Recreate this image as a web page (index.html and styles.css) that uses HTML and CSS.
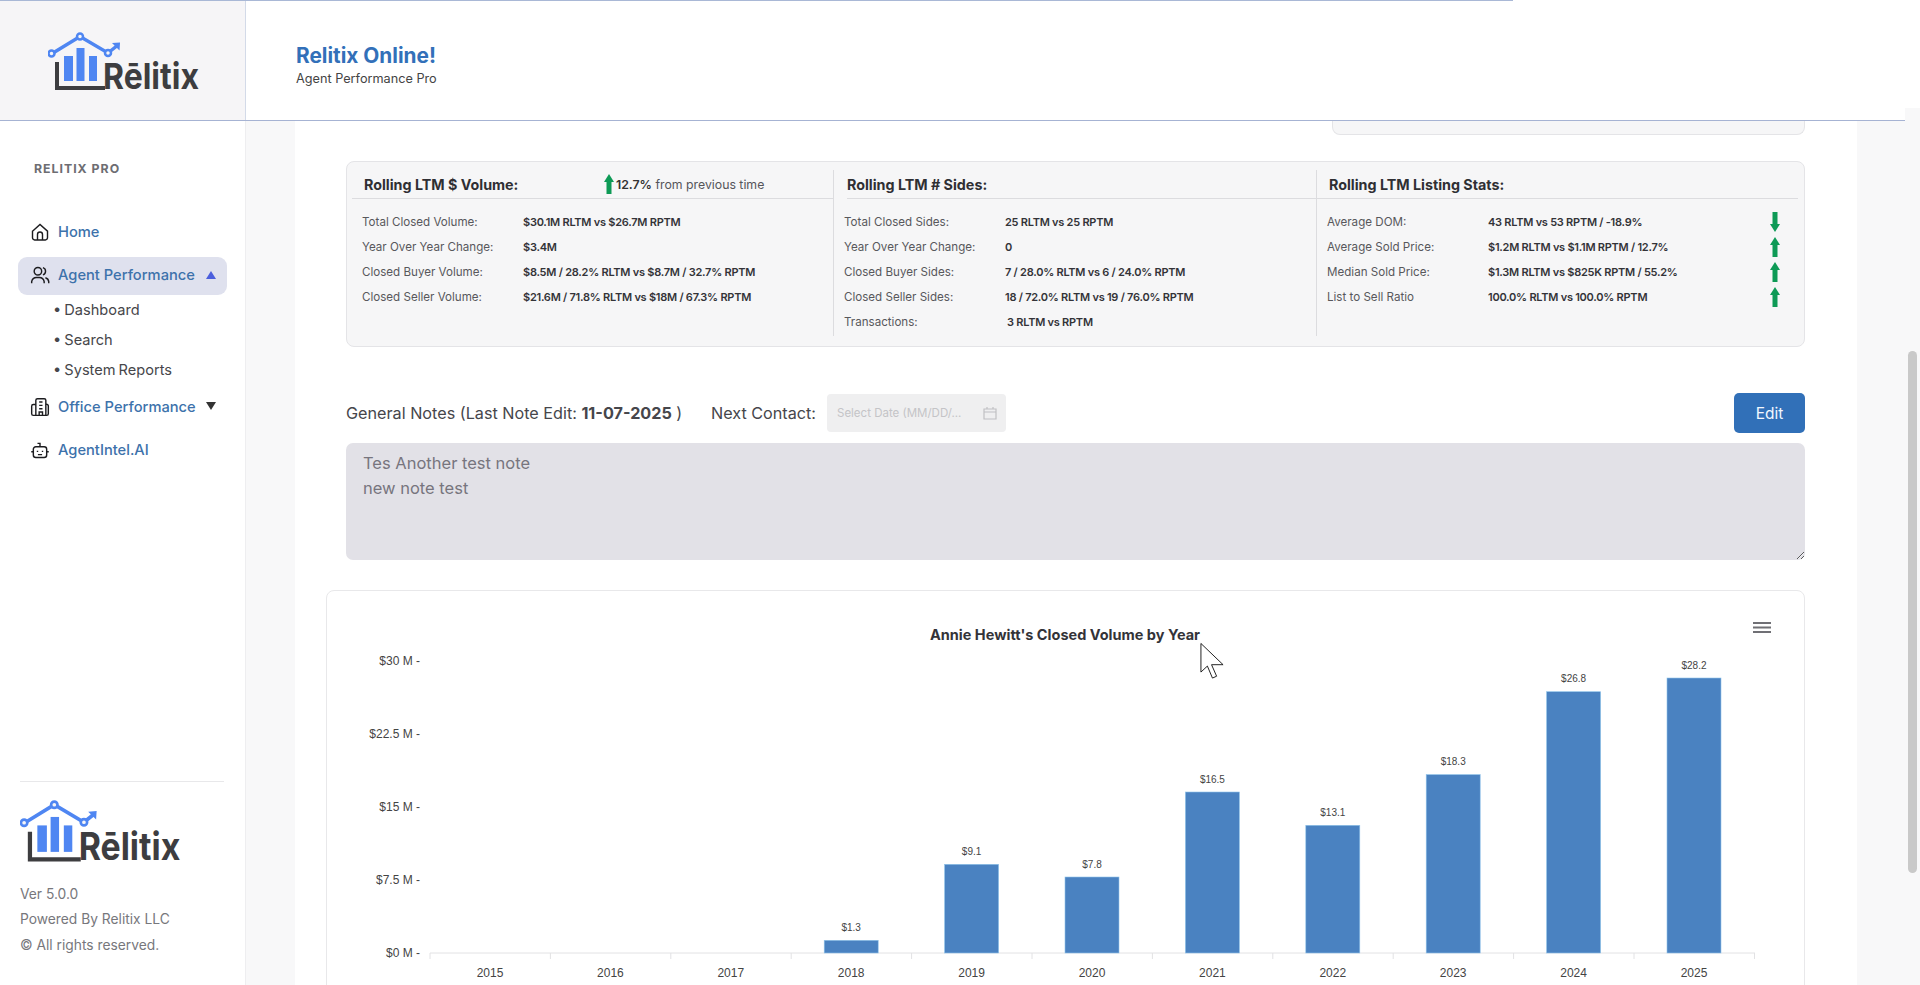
FILE: index.html
```html
<!DOCTYPE html>
<html lang="en">
<head>
<meta charset="utf-8">
<title>Relitix Online! Agent Performance Pro</title>
<link rel="stylesheet" href="styles.css">
</head>
<body>
<div class="app">
  <div class="topline"></div>
  <header class="header">
    <div class="header-logo">
      <svg class="logo-top" viewBox="0 0 190 68">
        <path class="logo-dark" d="M9 30V56H57" />
        <rect class="logo-blue-fill" x="16" y="24" width="9" height="25"/>
        <rect class="logo-blue-fill" x="28.5" y="16" width="8" height="33"/>
        <rect class="logo-blue-fill" x="41" y="24" width="8" height="25"/>
        <path class="logo-line" d="M5 21L32 4.500L60 21L70 13"/>
        <path class="logo-blue-fill" d="M64 11L72 10.500L71.500 18.500Z"/>
        <circle class="logo-dot" cx="3.500" cy="21.500" r="3"/>
        <circle class="logo-dot" cx="32" cy="4.500" r="3"/>
        <circle class="logo-dot" cx="60" cy="21" r="3"/>
        <text class="logo-word" x="55" y="57" textLength="96" lengthAdjust="spacingAndGlyphs">Rēlitix</text>
      </svg>
    </div>
    <div class="header-title">
      <h1>Relitix Online!</h1>
      <p>Agent Performance Pro</p>
    </div>
  </header>
  <div class="layout">
    <aside class="sidebar">
      <div class="side-label">RELITIX PRO</div>
      <nav class="nav">
        <a class="nav-item">
          <svg class="nav-icon" viewBox="0 0 24 24"><path d="M3 11L12 3L21 11V19A2.500 2.500 0 0 1 18.500 21.500H5.500A2.500 2.500 0 0 1 3 19Z"/><path d="M9 21.500V15A3 3 0 0 1 15 15V21.500"/></svg>
          <span>Home</span>
        </a>
        <a class="nav-item is-active">
          <svg class="nav-icon" viewBox="0 0 24 24"><circle cx="9.500" cy="7.500" r="4.500"/><path d="M2 22V20A6 6 0 0 1 8 15H11A6 6 0 0 1 17 20V22"/><path d="M15.500 3.200A4.500 4.500 0 0 1 15.500 11.800"/><path d="M18.500 15.300A5.500 5.500 0 0 1 22.500 20V22"/></svg>
          <span>Agent Performance</span>
          <i class="caret caret-up"></i>
        </a>
        <div class="sub-nav">
          <a class="sub-item">• Dashboard</a>
          <a class="sub-item">• Search</a>
          <a class="sub-item">• System Reports</a>
        </div>
        <a class="nav-item">
          <svg class="nav-icon" viewBox="0 0 24 24"><path d="M7 22V4A2 2 0 0 1 9 2H17A2 2 0 0 1 19 4V22"/><path d="M7 9H4A2 2 0 0 0 2 11V20A2 2 0 0 0 4 22H20A2 2 0 0 0 22 20V11A2 2 0 0 0 19 9"/><path d="M11 6H15M11 10H15M11 14H15M11 22V18H15V22M4.500 13H4.600M4.500 17H4.600"/></svg>
          <span>Office Performance</span>
          <i class="caret caret-down"></i>
        </a>
        <a class="nav-item">
          <svg class="nav-icon" viewBox="0 0 24 24"><rect x="4" y="8" width="16" height="13" rx="3"/><path d="M12 8V4H9M1.500 14H4M20 14H22.500M9 13V14.500M15 13V14.500M9.500 17.500H14.500"/></svg>
          <span>AgentIntel.AI</span>
        </a>
      </nav>
      <div class="side-footer">
        <svg class="logo-side" viewBox="0 0 190 68">
          <path class="logo-dark" d="M9 30V56H57" />
          <rect class="logo-blue-fill" x="16" y="24" width="9" height="25"/>
          <rect class="logo-blue-fill" x="28.5" y="16" width="8" height="33"/>
          <rect class="logo-blue-fill" x="41" y="24" width="8" height="25"/>
          <path class="logo-line" d="M5 21L32 4.500L60 21L70 13"/>
          <path class="logo-blue-fill" d="M64 11L72 10.500L71.500 18.500Z"/>
          <circle class="logo-dot" cx="3.500" cy="21.500" r="3"/>
          <circle class="logo-dot" cx="32" cy="4.500" r="3"/>
          <circle class="logo-dot" cx="60" cy="21" r="3"/>
          <text class="logo-word" x="55" y="57" textLength="96" lengthAdjust="spacingAndGlyphs">Rēlitix</text>
        </svg>
        <p>Ver 5.0.0</p>
        <p>Powered By Relitix LLC</p>
        <p>© All rights reserved.</p>
      </div>
    </aside>
    <main class="main">
      <div class="panel">
        <div class="card-fragment"></div>
        <section class="stats">
          <div class="stats-col">
            <div class="stats-head">
              <h2 class="head-fixed">Rolling LTM $ Volume:</h2>
              <svg class="arrow" viewBox="0 0 10 20"><path d="M5 0L10 8H7.500V20H2.500V8H0Z"/></svg>
              <span class="delta"><b>12.7%</b> from previous time</span>
            </div>
            <div class="row"><span class="k">Total Closed Volume:</span><span class="v">$30.1M RLTM vs $26.7M RPTM</span></div>
            <div class="row"><span class="k">Year Over Year Change:</span><span class="v">$3.4M</span></div>
            <div class="row"><span class="k">Closed Buyer Volume:</span><span class="v">$8.5M / 28.2% RLTM vs $8.7M / 32.7% RPTM</span></div>
            <div class="row"><span class="k">Closed Seller Volume:</span><span class="v">$21.6M / 71.8% RLTM vs $18M / 67.3% RPTM</span></div>
          </div>
          <div class="stats-col col-sides">
            <div class="stats-head head-inset"><h2>Rolling LTM # Sides:</h2></div>
            <div class="row"><span class="k">Total Closed Sides:</span><span class="v">25 RLTM vs 25 RPTM</span></div>
            <div class="row"><span class="k">Year Over Year Change:</span><span class="v">0</span></div>
            <div class="row"><span class="k">Closed Buyer Sides:</span><span class="v">7 / 28.0% RLTM vs 6 / 24.0% RPTM</span></div>
            <div class="row"><span class="k">Closed Seller Sides:</span><span class="v">18 / 72.0% RLTM vs 19 / 76.0% RPTM</span></div>
            <div class="row"><span class="k">Transactions:</span><span class="v v-nudge">3 RLTM vs RPTM</span></div>
          </div>
          <div class="stats-col col-listing">
            <div class="stats-head"><h2>Rolling LTM Listing Stats:</h2></div>
            <div class="row"><span class="k">Average DOM:</span><span class="v">43 RLTM vs 53 RPTM / -18.9%</span>
              <svg class="arrow arrow-row" viewBox="0 0 10 20"><path d="M5 20L10 12H7.500V0H2.500V12H0Z"/></svg></div>
            <div class="row"><span class="k">Average Sold Price:</span><span class="v">$1.2M RLTM vs $1.1M RPTM / 12.7%</span>
              <svg class="arrow arrow-row" viewBox="0 0 10 20"><path d="M5 0L10 8H7.500V20H2.500V8H0Z"/></svg></div>
            <div class="row"><span class="k">Median Sold Price:</span><span class="v">$1.3M RLTM vs $825K RPTM / 55.2%</span>
              <svg class="arrow arrow-row" viewBox="0 0 10 20"><path d="M5 0L10 8H7.500V20H2.500V8H0Z"/></svg></div>
            <div class="row"><span class="k">List to Sell Ratio</span><span class="v">100.0% RLTM vs 100.0% RPTM</span>
              <svg class="arrow arrow-row" viewBox="0 0 10 20"><path d="M5 0L10 8H7.500V20H2.500V8H0Z"/></svg></div>
          </div>
        </section>
        <div class="notes-bar">
          <span class="notes-title">General Notes (Last Note Edit: <b>11-07-2025</b> )</span>
          <span class="contact-label">Next Contact:</span>
          <div class="date-input">
            <span>Select Date (MM/DD/...</span>
            <svg class="cal" viewBox="0 0 14 14"><path d="M1 3H13V13H1ZM1 6H13M4 1V3M10 1V3"/></svg>
          </div>
          <button class="edit-btn" type="button">Edit</button>
        </div>
        <textarea class="notes" readonly>Tes Another test note
new note test</textarea>
        <section class="chart-card">
          <svg class="chart" viewBox="326 590 1479 395">
            <text class="chart-title" x="1065" y="640" text-anchor="middle">Annie Hewitt's Closed Volume by Year</text>
            <path class="burger" d="M1753 623H1771M1753 627.500H1771M1753 632H1771"/>
            <g class="y-labels" text-anchor="end">
              <text x="420" y="665">$30 M -</text>
              <text x="420" y="738">$22.5 M -</text>
              <text x="420" y="811">$15 M -</text>
              <text x="420" y="884">$7.5 M -</text>
              <text x="420" y="957">$0 M -</text>
            </g>
            <path class="axis" d="M430 953H1755M430 953V959M550.400 953V959M670.800 953V959M791.200 953V959M911.600 953V959M1032 953V959M1152.400 953V959M1272.800 953V959M1393.200 953V959M1513.600 953V959M1634 953V959M1754.500 953V959"/>
            <g class="bars">
              <rect x="824.200" y="940.300" width="54" height="12.700"/>
              <rect x="944.600" y="864.300" width="54" height="88.700"/>
              <rect x="1065" y="877" width="54" height="76"/>
              <rect x="1185.400" y="792" width="54" height="161"/>
              <rect x="1305.800" y="825.300" width="54" height="127.700"/>
              <rect x="1426.200" y="774.600" width="54" height="178.400"/>
              <rect x="1546.600" y="691.700" width="54" height="261.300"/>
              <rect x="1667" y="678" width="54" height="275"/>
            </g>
            <g class="bar-labels" text-anchor="middle">
              <text x="851.200" y="931">$1.3</text>
              <text x="971.600" y="855">$9.1</text>
              <text x="1092" y="868">$7.8</text>
              <text x="1212.400" y="783">$16.5</text>
              <text x="1332.800" y="816">$13.1</text>
              <text x="1453.200" y="765">$18.3</text>
              <text x="1573.600" y="682">$26.8</text>
              <text x="1694" y="669">$28.2</text>
            </g>
            <g class="x-labels" text-anchor="middle">
              <text x="490" y="977">2015</text>
              <text x="610.400" y="977">2016</text>
              <text x="730.800" y="977">2017</text>
              <text x="851.200" y="977">2018</text>
              <text x="971.600" y="977">2019</text>
              <text x="1092" y="977">2020</text>
              <text x="1212.400" y="977">2021</text>
              <text x="1332.800" y="977">2022</text>
              <text x="1453.200" y="977">2023</text>
              <text x="1573.600" y="977">2024</text>
              <text x="1694" y="977">2025</text>
            </g>
          </svg>
        </section>
      </div>
      <div class="scroll-thumb"></div>
    </main>
  </div>
  <svg class="cursor" viewBox="0 0 26 40"><path d="M1 1V32L8 25.500L13.500 38.500L18 36.500L12.500 24H25Z"/></svg>
</div>
</body>
</html>
```

FILE: styles.css
```css
* { box-sizing: border-box; }
html, body { margin: 0; padding: 0; }
body {
  font-family: Inter, "Noto Sans", "Liberation Sans", sans-serif;
  color: #444;
  background: #fff;
  overflow: hidden;
}
.app {
  position: relative;
  display: flex;
  flex-direction: column;
  width: 1920px;
  height: 985px;
  overflow: hidden;
}
.topline {
  position: absolute;
  top: 0;
  left: 0;
  z-index: 3;
  width: 1513px;
  height: 1px;
  background: #a9b8d6;
}

/* Header */
.header {
  position: relative;
  z-index: 2;
  display: flex;
  flex: none;
  width: 1905px;
  height: 121px;
  background: #fff;
  border-bottom: 1px solid #a6b3d3;
}
.header-logo {
  display: flex;
  align-items: flex-start;
  flex: none;
  width: 246px;
  padding: 32px 0 0 48px;
  background: #f6f5f7;
  border-right: 1px solid #d3dae8;
}
.logo-top { width: 190px; height: 68px; }
.header-title { padding: 44px 0 0 50px; }
.header-title h1 {
  margin: 0;
  font-size: 20.800px;
  line-height: 24px;
  font-weight: 700;
  color: #3270b9;
}
.header-title p {
  margin: 3px 0 0;
  font-size: 12.700px;
  line-height: 16px;
  color: #444;
}

/* Logo */
.logo-dark { fill: none; stroke: #3d3d40; stroke-width: 4; }
.logo-blue-fill { fill: #4f86f2; }
.logo-line { fill: none; stroke: #4f86f2; stroke-width: 3.500; }
.logo-dot { fill: #f6f5f7; stroke: #4f86f2; stroke-width: 2.500; }
.logo-word {
  font-family: Inter, sans-serif;
  font-size: 36px;
  font-weight: 700;
  fill: #3d3d40;
}

/* Page body */
.layout {
  display: flex;
  flex: 1;
  min-height: 0;
  margin-top: -13px;
}
.sidebar {
  display: flex;
  flex-direction: column;
  flex: none;
  width: 246px;
  margin-top: 13px;
  padding-top: 40px;
  background: #fff;
  border-right: 1px solid #eeeef0;
}
.side-label {
  padding-left: 34px;
  font-size: 12.300px;
  line-height: 16px;
  font-weight: 700;
  letter-spacing: 1px;
  color: #6d6d72;
}
.nav {
  display: flex;
  flex-direction: column;
  gap: 5px;
  margin: 37px 18px 0;
}
.nav-item {
  display: flex;
  align-items: center;
  gap: 8px;
  height: 38px;
  padding: 0 11px 2px 12px;
  border-radius: 9px;
  font-size: 14.700px;
  font-weight: 500;
  color: #3d72ab;
}
.nav-item.is-active { background: #dfe1ee; }
.nav-icon {
  flex: none;
  width: 20px;
  height: 20px;
  fill: none;
  stroke: #1c1c1f;
  stroke-width: 1.700;
}
.caret {
  width: 0;
  height: 0;
  margin-left: auto;
  border-left: 5px solid transparent;
  border-right: 5px solid transparent;
}
.caret-up { border-bottom: 8px solid #4c5fdd; }
.caret-down { border-top: 8px solid #333; margin-bottom: 3px; }
.sub-nav { display: flex; flex-direction: column; margin-top: -5px; margin-bottom: -1px; }
.sub-item {
  height: 30px;
  padding-left: 35px;
  font-size: 14.600px;
  line-height: 30px;
  word-spacing: -1px;
  color: #46464a;
}
.side-footer {
  margin: auto 21px 0 20px;
  padding: 20px 0 27px;
  border-top: 1px solid #e8e8ea;
  color: #77777c;
  font-size: 13.800px;
}
.logo-side { display: block; width: 202px; height: 72px; margin: -2px 0 10px; }
.side-footer p { margin: 0; line-height: 25.500px; white-space: nowrap; }

.main {
  position: relative;
  flex: 1;
  min-width: 0;
  padding: 0 63px 0 49px;
  background: #f8f8f9;
}
.panel {
  height: 100%;
  padding: 0 52px 0 51px;
  overflow: hidden;
  background: #fff;
}
.scroll-thumb {
  position: absolute;
  top: 243px;
  right: 3px;
  width: 9px;
  height: 522px;
  border-radius: 5px;
  background: #c9c9c9;
}

/* Stats */
.card-fragment {
  height: 27px;
  margin-left: 986px;
  background: #f6f6f7;
  border: 1px solid #e4e4e7;
  border-top: 0;
  border-radius: 0 0 8px 8px;
}
.stats {
  display: grid;
  grid-template-columns: 481px 483px 1fr;
  height: 186px;
  margin-top: 26px;
  padding: 8px 6px 10px 5px;
  background: #f6f6f7;
  border: 1px solid #e4e4e7;
  border-radius: 8px;
}
.stats-col { min-width: 0; }
.col-sides, .col-listing { border-left: 1px solid #dcdcdf; }
.stats-head {
  display: flex;
  align-items: center;
  height: 29px;
  margin-bottom: 10px;
  padding-left: 12px;
  border-bottom: 1px solid #dcdcdf;
}
.head-inset { margin-left: 13px; padding-left: 0; }
.stats-head h2 {
  margin: 0;
  font-size: 14.300px;
  font-weight: 700;
  color: #2f2f33;
  white-space: nowrap;
}
.head-fixed { width: 240px; flex: none; }
.arrow { flex: none; width: 10px; height: 20px; fill: #0e9a56; }
.delta { margin-left: 2px; font-size: 12.300px; color: #55555a; white-space: nowrap; }
.delta b { font-weight: 600; color: #333; }
.row {
  display: flex;
  align-items: center;
  height: 25px;
  padding-left: 10px;
  font-size: 11.600px;
  white-space: nowrap;
}
.k { flex: none; width: 161px; color: #58585c; }
.v { flex: 1; font-size: 11px; font-weight: 600; letter-spacing: -0.250px; color: #333338; }
.v-nudge { padding-left: 2px; }
.arrow-row { margin-right: 18px; }

/* Notes */
.notes-bar {
  display: flex;
  align-items: center;
  height: 40px;
  margin-top: 46px;
  font-size: 16.200px;
  color: #46464b;
  white-space: nowrap;
}
.notes-title { flex: none; width: 365px; }
.notes-title b { font-weight: 700; }
.contact-label { flex: none; width: 116px; }
.date-input {
  display: flex;
  align-items: center;
  justify-content: space-between;
  flex: none;
  width: 179px;
  height: 38px;
  padding: 0 9px 0 10px;
  border-radius: 4px;
  background: #efeff0;
  font-size: 11.500px;
  color: #c4c4c7;
}
.cal { width: 14px; height: 14px; fill: none; stroke: #c0c0c3; stroke-width: 1.200; }
.edit-btn {
  width: 71px;
  height: 40px;
  margin-left: auto;
  border: 0;
  border-radius: 5px;
  background: #3170b8;
  color: #f2f8ff;
  font: 400 15.500px Inter, sans-serif;
}
.notes {
  display: block;
  width: 100%;
  height: 117px;
  margin-top: 10px;
  padding: 8px 17px;
  border: 0;
  border-radius: 7px;
  outline: 0;
  background: #e2e1e7;
  color: #77757e;
  font: 400 16.500px/25px Inter, sans-serif;
}

/* Chart */
.chart-card {
  height: 440px;
  margin: 30px 0 0 -20px;
  background: #fff;
  border: 1px solid #e8e8ea;
  border-radius: 8px;
}
.chart { display: block; width: 1479px; height: 395px; margin: -1px 0 0 -1px; overflow: visible; }
.chart-title { font-size: 14.500px; font-weight: 700; fill: #333338; }
.burger { fill: none; stroke: #707075; stroke-width: 2; }
.y-labels text, .x-labels text, .bar-labels text { font-family: "Liberation Sans", sans-serif; fill: #444; }
.y-labels text, .x-labels text { font-size: 12px; }
.bar-labels text { font-size: 10px; }
.axis { fill: none; stroke: #e2e2e4; stroke-width: 1; }
.bars rect { fill: #4a82c1; stroke: #8fc3ea; stroke-width: 0.600; }
.cursor {
  position: absolute;
  top: 642px;
  left: 1200px;
  z-index: 4;
  width: 24px;
  height: 38px;
  fill: #fff;
  stroke: #111;
  stroke-width: 1;
}
```
